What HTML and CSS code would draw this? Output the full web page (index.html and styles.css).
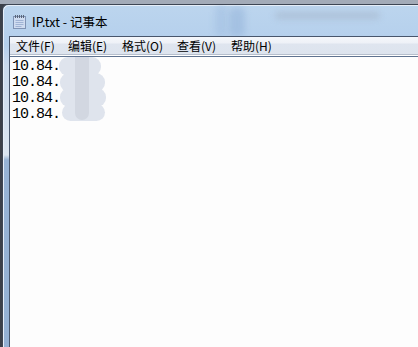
FILE: index.html
```html
<!DOCTYPE html>
<html>
<head>
<meta charset="utf-8">
<link rel="stylesheet" href="styles.css">
</head>
<body>
<div class="screen">
  <div class="window">
    <div class="glass-blob blob-a"></div>
    <div class="glass-blob blob-b"></div>
    <div class="glass-blob blob-c"></div>
    <div class="titlebar">
      <svg class="app-icon" width="15" height="15" viewBox="0 0 15 15">
        <rect x="1.5" y="2.5" width="12" height="12" fill="#e8eef8" stroke="#7f93b4"/>
        <rect x="2" y="3" width="11" height="11" fill="#cfdcf0"/>
        <line x1="3.5" y1="6.5" x2="11.5" y2="6.5" stroke="#9fb3d4"/>
        <line x1="3.5" y1="8.5" x2="11.5" y2="8.5" stroke="#9fb3d4"/>
        <line x1="3.5" y1="10.5" x2="11.5" y2="10.5" stroke="#9fb3d4"/>
        <line x1="3.5" y1="12.5" x2="9.5" y2="12.5" stroke="#9fb3d4"/>
        <g stroke="#5a6578" stroke-width="1">
          <line x1="3.5" y1="1" x2="3.5" y2="4"/>
          <line x1="5.5" y1="1" x2="5.5" y2="4"/>
          <line x1="7.5" y1="1" x2="7.5" y2="4"/>
          <line x1="9.5" y1="1" x2="9.5" y2="4"/>
          <line x1="11.5" y1="1" x2="11.5" y2="4"/>
        </g>
      </svg>
      <span class="title">IP.txt - 记事本</span>
    </div>
    <div class="client">
      <div class="menubar">
        <span class="menu-item">文件(F)</span>
        <span class="menu-item">编辑(E)</span>
        <span class="menu-item">格式(O)</span>
        <span class="menu-item">查看(V)</span>
        <span class="menu-item">帮助(H)</span>
      </div>
      <div class="edit">
        <div class="line">10.84.</div>
        <div class="line">10.84.</div>
        <div class="line">10.84.</div>
        <div class="line">10.84.</div>
        <div class="smudge smudge-1"></div>
        <div class="smudge smudge-2"></div>
        <div class="smudge smudge-3"></div>
        <div class="smudge smudge-4"></div>
        <div class="smudge smudge-dark"></div>
      </div>
    </div>
  </div>
</div>
</body>
</html>
```

FILE: styles.css
```css
html, body {
  margin: 0;
  padding: 0;
  width: 418px;
  height: 347px;
  overflow: hidden;
  background: #3c4049;
}

.screen {
  width: 418px;
  height: 347px;
  padding: 4px 0 0 2px;
  box-sizing: border-box;
  background: linear-gradient(to bottom, #a3abb8 0, #a3abb8 4px, #3c4049 4px);
}

.window {
  position: relative;
  height: 100%;
  box-sizing: border-box;
  border-top: 1px solid #3e4654;
  border-left: 1px solid #3e4654;
  border-top-left-radius: 6px;
  background: linear-gradient(to bottom, #bcd5ee 0, #b4cfec 40px, #c9d9ec 60px, #dbe5f1 150px, #97b3d5 155px, #94b1d4 100%);
  box-shadow: inset 1px 1px 0 #e6eef8;
  display: flex;
  flex-direction: column;
  overflow: hidden;
}

.glass-blob {
  position: absolute;
  border-radius: 6px;
  filter: blur(3px);
}
.blob-a {
  left: 272px;
  top: 7px;
  width: 105px;
  height: 7px;
  background: #a4b4c8;
  opacity: 0.55;
}
.blob-b {
  left: 212px;
  top: 0;
  width: 12px;
  height: 32px;
  background: #a3c0e2;
  opacity: 0.6;
}
.blob-c {
  left: 226px;
  top: 2px;
  width: 16px;
  height: 30px;
  background: #8eaed6;
  opacity: 0.45;
}

.titlebar {
  position: relative;
  height: 31px;
  display: flex;
  align-items: center;
  padding-left: 9px;
  gap: 5px;
}

.app-icon {
  display: block;
  margin-top: 2px;
}

.title {
  font-family: "Noto Sans CJK SC", "Noto Sans", sans-serif;
  font-size: 12.5px;
  color: #000;
  margin-top: 1px;
}

.client {
  position: relative;
  flex: 1;
  margin-left: 6px;
  border-top: 1px solid #48566c;
  border-left: 1px solid #48566c;
  display: flex;
  flex-direction: column;
  background: #fdfdfd;
}

.menubar {
  height: 17px;
  display: flex;
  align-items: center;
  padding-left: 6px;
  background: linear-gradient(to bottom, #f5f7fb 0, #eef1f7 6px, #dfe5ef 7px, #dde4ee 100%);
  border-bottom: 1px solid #b6bfcd;
  box-shadow: 0 1px 0 #ffffff;
}

.menu-item {
  font-family: "Noto Sans CJK SC", "Noto Sans", sans-serif;
  font-size: 12px;
  color: #000;
  line-height: 17px;
  flex: none;
  white-space: nowrap;
  width: 54px;
}
.menu-item:first-child {
  width: 52px;
}
.menu-item:nth-child(3) {
  width: 55px;
}

.edit {
  position: relative;
  flex: 1;
  margin-top: 1px;
  border-top: 1px solid #5f7390;
  padding: 2px 0 0 2px;
  background: #fdfdfd;
}

.line {
  font-family: "Liberation Mono", monospace;
  font-size: 15px;
  line-height: 16px;
  letter-spacing: -1px;
  color: #000;
  height: 16px;
}

.smudge {
  position: absolute;
  background: #dfe4ed;
  border-radius: 9px;
}
.smudge-1 { left: 49px; top: 0; width: 42px; height: 19px; }
.smudge-2 { left: 50px; top: 16px; width: 45px; height: 19px; }
.smudge-3 { left: 50px; top: 31px; width: 46px; height: 19px; }
.smudge-4 { left: 52px; top: 47px; width: 43px; height: 17px; }
.smudge-dark {
  left: 65px;
  top: 0;
  width: 14px;
  height: 63px;
  border-radius: 0 0 7px 7px;
  background: #d2d7e1;
}
```
